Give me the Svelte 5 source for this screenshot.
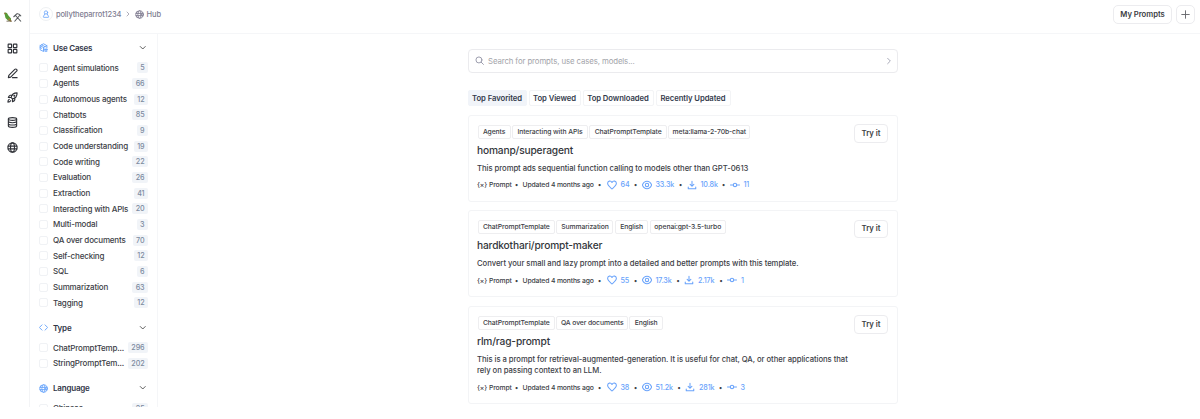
<script>
  const useCases = [
    ['Agent simulations', 5], ['Agents', 66], ['Autonomous agents', 12], ['Chatbots', 85],
    ['Classification', 9], ['Code understanding', 19], ['Code writing', 22], ['Evaluation', 26],
    ['Extraction', 41], ['Interacting with APIs', 20], ['Multi-modal', 3], ['QA over documents', 70],
    ['Self-checking', 12], ['SQL', 6], ['Summarization', 63], ['Tagging', 12]
  ];
  const sections = [
    { title: 'Use Cases', icon: 'box', items: useCases },
    { title: 'Type', icon: 'code', items: [['ChatPromptTemp...', 296], ['StringPromptTem...', 202]] },
    { title: 'Language', icon: 'globe', items: [['Chinese', 25]] }
  ];
  const tabs = [['Top Favorited', 59], ['Top Viewed', 52], ['Top Downloaded', 71], ['Recently Updated', 75]];
  const cards = [
    {
      tags: [['Agents', 33], ['Interacting with APIs', 76], ['ChatPromptTemplate', 77.5], ['meta:llama-2-70b-chat', 82]],
      title: 'homanp/superagent',
      lines: ['This prompt ads sequential function calling to models other than GPT-0613'],
      stats: [['heart', '64', 25], ['eye', '33.3k', 35], ['download', '10.8k', 33], ['commit', '11', 30]]
    },
    {
      tags: [['ChatPromptTemplate', 77.5], ['Summarization', 57], ['English', 33.5], ['openai:gpt-3.5-turbo', 76]],
      title: 'hardkothari/prompt-maker',
      lines: ['Convert your small and lazy prompt into a detailed and better prompts with this template.'],
      stats: [['heart', '55', 25], ['eye', '17.3k', 32.5], ['download', '2.17k', 33], ['commit', '1', 30]]
    },
    {
      tags: [['ChatPromptTemplate', 77.5], ['QA over documents', 71.5], ['English', 33.5]],
      title: 'rlm/rag-prompt',
      lines: ['This is a prompt for retrieval-augmented-generation. It is useful for chat, QA, or other applications that', 'rely on passing context to an LLM.'],
      stats: [['heart', '38', 25], ['eye', '51.2k', 33.5], ['download', '281k', 31.5], ['commit', '3', 30]]
    }
  ];
</script>

{#snippet icon(name, size)}
  <svg class="icon" width={size} height={size} viewBox="0 0 24 24" fill="none" stroke="currentColor" stroke-width="2.5" stroke-linecap="round" stroke-linejoin="round">
    {#if name === 'globe'}
      <circle cx="12" cy="12" r="10" /><ellipse cx="12" cy="12" rx="4.3" ry="10" /><path d="M2.5 9h19M2.5 15h19" />
    {:else if name === 'code'}
      <path d="M8 5l-7 7 7 7M16 5l7 7-7 7" />
    {:else if name === 'box'}
      <path d="M11 22 3 18V7l9-5 9 5v6M3 7l9 5 9-5M12 12v10M7 4.8l9 5M7 14l-4-2" /><path d="M15 16h3v3h-3zM20 16h2v3h-2zM16 22h5" />
    {:else if name === 'grid'}
      <rect x="2.5" y="2.5" width="7.5" height="7.5" rx="1" /><rect x="14" y="2.5" width="7.5" height="7.5" rx="1" /><rect x="2.5" y="14" width="7.5" height="7.5" rx="1" /><rect x="14" y="14" width="7.5" height="7.5" rx="1" />
    {:else if name === 'pen'}
      <path d="M12 21h10M3 21l1-5L17 3a2.8 2.8 0 0 1 4 4L8 20z" />
    {:else if name === 'rocket'}
      <path d="M12 15l-3-3c1-5 5-10 13-10 0 8-5 12-10 13zM9 12H3s1-4 4-5h5M12 15v6s4-1 5-4v-5M5 16c-2 1-3 5-3 6 1 0 5-1 6-3" /><circle cx="16" cy="8" r="1" />
    {:else if name === 'database'}
      <ellipse cx="12" cy="4.5" rx="9" ry="3" /><path d="M3 4.5v15c0 4 18 4 18 0v-15M3 9.5c0 4 18 4 18 0M3 14.5c0 4 18 4 18 0" />
    {:else if name === 'user'}
      <circle cx="12" cy="7.5" r="5" /><path d="M8.5 11.5 4 20c-.5 1 0 2 1 2h14c1 0 1.500-1 1-2l-4.500-8.500" />
    {:else if name === 'search'}
      <circle cx="10.500" cy="10.500" r="8" /><path d="m16.500 16.500 6 6" />
    {:else if name === 'down'}
      <path d="m4 8 8 8 8-8" />
    {:else if name === 'right'}
      <path d="m8 4 8 8-8 8" />
    {:else if name === 'plus'}
      <path d="M12 2v20M2 12h20" />
    {:else if name === 'heart'}
      <path d="M12 21.500C8 18 1.500 13.500 1.500 8c0-6 7.500-7.500 10.500-2 3-5.500 10.500-4 10.500 2 0 5.500-6.500 10-10.500 13.500z" />
    {:else if name === 'eye'}
      <path d="M.8 12c5-12 17.400-12 22.400 0-5 12-17.400 12-22.400 0z" /><circle cx="12" cy="12" r="4" />
    {:else if name === 'download'}
      <path d="M12 3v12M7.500 10.500 12 15l4.500-4.500M3 17v4h18v-4" />
    {:else if name === 'commit'}
      <circle cx="12" cy="12" r="4" /><path d="M1 12h7M16 12h7" />
    {/if}
  </svg>
{/snippet}

<div class="page">
  <nav class="rail">
    <svg class="logo" width="19" height="11" viewBox="0 0 19 11">
      <path d="M1.200.8C3-.2 4.500 1 5 3l3 3.500v3L5 8.500 2.500 6z" fill="#579b36" />
      <path d="M.8 1.500 2 .7l.8 1.200z" fill="#bd4f38" />
      <path d="m6 6 3 3.800-2-.5L5 7.500z" fill="#a77c38" />
      <path d="M3.500 9.200 8.800 9" stroke="#61513e" stroke-width=".8" />
      <path d="m11.500 9.500 5.500-6.500M12.500 3.500l5.500 6M10.500 5l3.500-3.300M14 1.800c2-.3 3 .6 4 2.500" fill="none" stroke="#55595c" stroke-width="1.100" />
    </svg>
    <div class="links">
      {#each ['grid', 'pen', 'rocket', 'database', 'globe'] as name}{@render icon(name, 11)}{/each}
    </div>
  </nav>
  <div class="main">
    <header>
      <div class="crumbs">
        <span class="avatar">{@render icon('user', 8)}</span>
        <span class="owner">pollytheparrot1234</span>
        {@render icon('right', 6)}
        <span class="hub">{@render icon('globe', 9)}Hub</span>
      </div>
      <div class="actions">
        <button class="mine">My Prompts</button>
        <button class="add">{@render icon('plus', 9)}</button>
      </div>
    </header>
    <div class="body">
      <aside>
        {#each sections as section}
          <section>
            <h2><span class="blue">{@render icon(section.icon, 9)}</span>{section.title}<span class="chev">{@render icon('down', 7.5)}</span></h2>
            {#each section.items as [label, count]}
              <div class="row"><i class="check"></i><span>{label}</span><b>{count}</b></div>
            {/each}
          </section>
        {/each}
      </aside>
      <main>
        <div class="content">
          <div class="search">{@render icon('search', 9)}<span>Search for prompts, use cases, models...</span>{@render icon('right', 8)}</div>
          <div class="tabs">
            {#each tabs as [label, width], i}<button class:active={i === 0} style:width="{width}px">{label}</button>{/each}
          </div>
          {#each cards as card}
            <article>
              <button class="try">Try it</button>
              <div class="tags">{#each card.tags as [label, width]}<span style:width="{width}px">{label}</span>{/each}</div>
              <h3>{card.title}</h3>
              <p>{#each card.lines as line}<span>{line}</span>{/each}</p>
              <div class="meta">
                <span class="braces">{'{×}'}</span><span class="kind">Prompt</span><em>•</em><span class="updated">Updated 4 months ago</span>
                {#each card.stats as [name, value, width]}
                  <em>•</em><span class="stat" class:first={name === 'heart'} style:width="{width}px">{@render icon(name, 10)}{value}</span>
                {/each}
              </div>
            </article>
          {/each}
        </div>
      </main>
    </div>
  </div>
</div>

<style>
  :global(body) { margin: 0; background: #fff; }
  .page { width: 1200px; height: 407px; overflow: hidden; display: flex; font-family: Inter, sans-serif; color: #3c4046; font-size: 8px; }
  .page * { box-sizing: border-box; }
  button { font-family: inherit; padding: 0; background: #fff; white-space: nowrap; }
  .icon { flex: none; display: block; }
  .rail { width: 30px; flex: none; border-right: 1px solid #f3f4f6; padding: 12px 0 0 3px; }
  .logo { display: block; }
  .links { display: flex; flex-direction: column; gap: 13.7px; padding: 20px 0 0 4px; color: #303238; }
  .main { flex: 1; display: flex; flex-direction: column; min-width: 0; }
  header { height: 33.5px; flex: none; border-bottom: 1px solid #f5f6f8; display: flex; justify-content: space-between; padding: 0 5px 4px 9px; align-items: center; }
  .crumbs { display: flex; align-items: center; color: #807d91; font-size: 7.500px; font-weight: 500; }
  .avatar { width: 14px; height: 14px; border: 1px solid #eef0f3; border-radius: 50%; display: grid; place-items: center; color: #6ca6fa; margin-right: 3px; }
  .owner { width: 69px; white-space: nowrap; letter-spacing: -.15px; }
  .hub { display: flex; gap: 3px; align-items: center; margin-left: 3.500px; letter-spacing: -.1px; }
  .actions { display: flex; gap: 4px; }
  .actions button { height: 19px; border: 1px solid #ececef; border-radius: 5px; color: #3b3d43; }
  .mine { width: 59px; font-size: 7.700px; font-weight: 600; letter-spacing: -.03px; }
  .actions .add { width: 19px; display: grid; place-items: center; color: #66686d; }
  .body { display: flex; flex: 1; min-height: 0; }
  aside { width: 127.500px; flex: none; border-right: 1px solid #f5f6f8; padding: 6px 8.500px 0 9px; }
  section { margin-bottom: 8.800px; }
  h2 { margin: 0 0 4px; height: 16.500px; display: flex; align-items: center; font-size: 8px; font-weight: 600; color: #303647; letter-spacing: -.2px; }
  .blue { color: #6aa5fb; width: 14px; }
  .chev { margin-left: auto; padding-right: 2px; color: #333; }
  .row { height: 15.670px; display: flex; align-items: center; white-space: nowrap; font-size: 8px; font-weight: 500; letter-spacing: -.17px; }
  .check { width: 9px; height: 9px; border: 1px solid #f0f2f5; border-radius: 2px; margin-right: 5px; flex: none; }
  .row b { margin-left: auto; height: 11px; line-height: 11px; background: #f1f4f8; color: #7c8a9f; border-radius: 2px; padding: 0 3.500px; font-size: 7.200px; font-weight: 500; letter-spacing: -.1px; }
  main { flex: 1; padding-left: 310px; }
  .content { width: 430px; }
  .search { height: 24px; margin-top: 15px; border: 1px solid #ebebee; border-radius: 4px; display: flex; align-items: center; padding: 0 4px 0 6px; color: #9698a9; }
  .search span { flex: 1; margin-left: 4.500px; color: #a3a4aa; font-size: 7.800px; letter-spacing: -.1px; }
  .tabs { display: flex; gap: 2px; margin-top: 17px; }
  .tabs button { height: 16.500px; border: 1px solid #f3f4f6; border-radius: 2px; color: #343b4c; font-size: 7.700px; font-weight: 600; letter-spacing: -.07px; padding-top: 1px; }
  .tabs .active { background: #f1f4f9; border-color: #f1f4f9; }
  article { height: 87px; border: 1px solid #f3f4f6; border-radius: 3px; margin-top: 8.500px; padding: 9px 8.500px 0 8.500px; display: grid; grid-template-columns: 1fr 34px; align-content: start; }
  article:last-child { height: 98px; }
  article > :not(.try) { grid-column: 1; }
  .try { grid-column: 2; grid-row: 1 / 3; height: 18.500px; border: 1px solid #ececef; border-radius: 4px; font-size: 7.700px; font-weight: 600; color: #3c3e44; margin-top: -.5px; }
  .tags { grid-row: 1; display: flex; gap: 1.400px; height: 14px; padding-left: .6px; }
  .tags span { height: 14px; line-height: 12px; text-align: center; border: 1px solid #eeeef0; border-radius: 2px; font-size: 6.800px; font-weight: 500; letter-spacing: -.09px; white-space: nowrap; }
  h3 { margin: 3px 0 0; height: 17px; line-height: 16px; font-size: 10.200px; font-weight: 500; color: #33363b; letter-spacing: -.16px; }
  p { margin: 4px 0 0; font-size: 7.700px; line-height: 11.500px; white-space: nowrap; font-weight: 500; letter-spacing: -.045px; }
  p span { display: block; }
  .meta { display: flex; align-items: center; height: 12px; margin-top: 4.500px; font-size: 6.800px; font-weight: 500; white-space: nowrap; letter-spacing: -.14px; }
  .braces { width: 12px; }
  .kind { width: 23.500px; }
  .updated { width: 73px; }
  em { font-style: normal; width: 8px; text-align: center; flex: none; margin-right: 2px; }
  .stat { display: flex; align-items: center; gap: 4px; color: #69a3fb; font-size: 7.200px; flex: none; }
  .first { margin-left: 1px; }
</style>
